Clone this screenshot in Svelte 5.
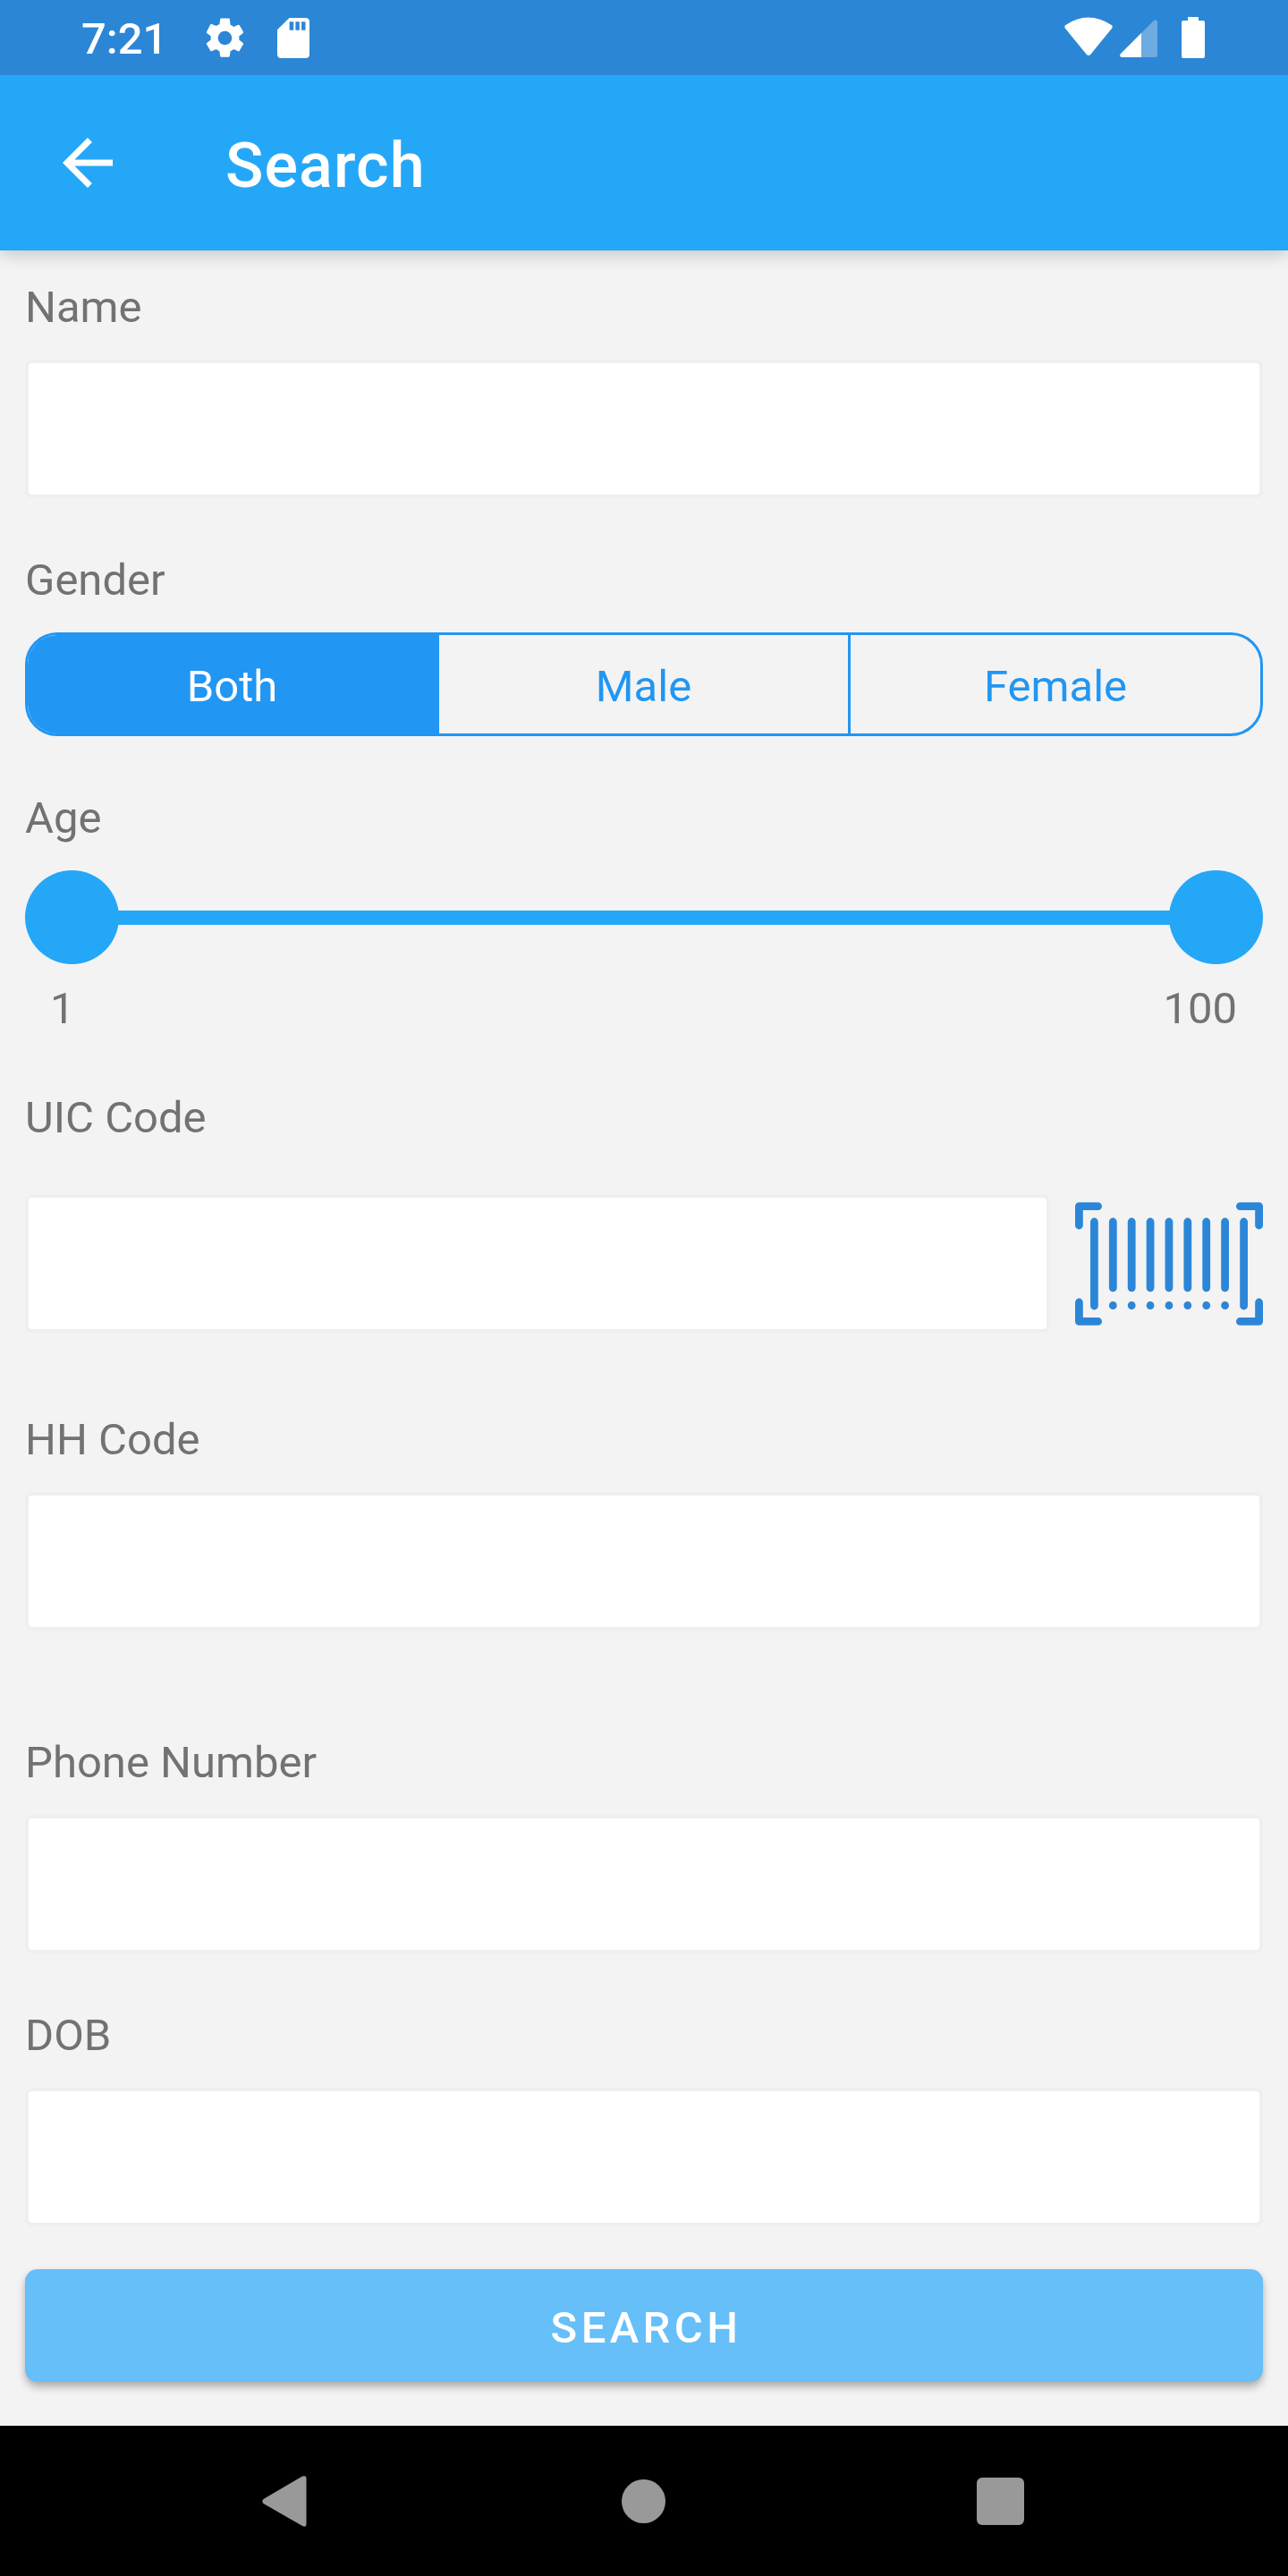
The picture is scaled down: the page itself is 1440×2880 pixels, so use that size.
<script>
  let gender = $state('Both');
  const genders = ['Both', 'Male', 'Female'];
  const shortBars = Array.from({ length: 7 }, (_, i) => 42.3 + i * 20.88);
</script>

<div class="screen">
  <div class="status">
    <span class="time">7:21</span>
    <svg class="gear" viewBox="0 0 24 24" fill="#fff"><path d="M19.14 12.94c.04-.3.06-.61.06-.94 0-.32-.02-.64-.07-.94l2.03-1.58c.18-.14.23-.41.12-.61l-1.92-3.32c-.12-.22-.37-.29-.59-.22l-2.39.96c-.5-.38-1.03-.7-1.62-.94L14.4 2.41c-.04-.24-.24-.41-.48-.41h-3.84c-.24 0-.43.17-.47.41l-.36 2.54c-.59.24-1.13.57-1.62.94l-2.39-.96c-.22-.08-.47 0-.59.22L2.74 8.87c-.12.21-.08.47.12.61l2.03 1.58c-.05.3-.09.63-.09.94s.02.64.07.94l-2.03 1.58c-.18.14-.23.41-.12.61l1.92 3.32c.12.22.37.29.59.22l2.39-.96c.5.38 1.03.7 1.62.94l.36 2.54c.05.24.24.41.48.41h3.84c.24 0 .44-.17.47-.41l.36-2.54c.59-.24 1.13-.56 1.62-.94l2.39.96c.22.08.47 0 .59-.22l1.92-3.32c.12-.22.07-.47-.12-.61l-2.01-1.58zM12 15.5c-1.93 0-3.5-1.57-3.5-3.5s1.57-3.5 3.5-3.5 3.5 1.57 3.5 3.5-1.57 3.5-3.5 3.5z" /></svg>
    <svg class="card" viewBox="0 0 36 45"><path fill="#fff" fill-rule="evenodd" d="M13.5 0H31.5Q36 0 36 4.5V40.5Q36 45 31.5 45H4.5Q0 45 0 40.5V13.3ZM13.6 4.3V13.7H18.2V4.3ZM20.4 4.3V13.7H24.8V4.3ZM27.1 4.3V13.7H31.5V4.3Z" /></svg>
    <span class="spacer"></span>
    <svg class="wifi" viewBox="0 0 54 44"><path fill="#fff" d="M1 9.2Q26.5-8 53 9.2Q54.4 10.6 53.2 12.4L29.2 42Q27 44 24.8 42L.8 12.4Q-.4 10.6 1 9.2Z" /></svg>
    <svg class="signal" viewBox="0 0 42 42"><path fill="#6dabe2" d="M1 38 38 1Q42-1 42 3V40Q42 42 40 42H2Q-1 41 1 38Z" /><path fill="#fff" d="M24 15V42H2Q-1 41 1 38Z" /></svg>
    <svg class="battery" viewBox="0 0 26 46" fill="#fff"><path d="M7 0H19V4H24Q26 4 26 6V44Q26 46 24 46H2Q0 46 0 44V6Q0 4 2 4H7Z" /></svg>
  </div>

  <header class="appbar">
    <svg class="back" viewBox="0 0 24 24" fill="#fff"><path d="M20 11H7.83l5.59-5.59L12 4l-8 8 8 8 1.41-1.41L7.83 13H20v-2z" /></svg>
    <h1>Search</h1>
  </header>

  <main>
    <label for="name">Name</label>
    <input id="name" />

    <span class="label next">Gender</span>
    <div class="segments">
      {#each genders as g}
        <button class:active={gender === g} onclick={() => (gender = g)}>{g}</button>
      {/each}
    </div>

    <span class="label next">Age</span>
    <div class="slider">
      <span class="thumb"></span>
      <span class="track"></span>
      <span class="thumb"></span>
    </div>
    <div class="range"><span>1</span><span>100</span></div>

    <label class="uic" for="uic">UIC Code</label>
    <div class="scan">
      <input id="uic" />
      <svg class="barcode" viewBox="0 0 210 138" fill="none" stroke="#2c86d7" stroke-width="8.8" stroke-linecap="round" stroke-linejoin="round">
        <path d="M4.4 26V4.6H25.6M184.4 4.6H205.6V26M4.4 112V133.4H25.6M184.4 133.4H205.6V112" />
        <path d="M21.4 22V116M188.6 22V116" />
        {#each shortBars as x}
          <path d="M{x} 22V95.8M{x} 115.4V115.6" />
        {/each}
      </svg>
    </div>

    <label class="hh" for="hh">HH Code</label>
    <input id="hh" />

    <label class="phone" for="phone">Phone Number</label>
    <input id="phone" />

    <label class="next" for="dob">DOB</label>
    <input id="dob" />

    <button class="submit">SEARCH</button>
  </main>

  <nav>
    <svg class="nav-back" viewBox="0 0 50 57"><path fill="#999" d="M45 .6Q49.5-1 49.5 3V54Q49.5 58 45 56L1.5 31Q-.8 28.5 1.5 26Z" /></svg>
    <span class="nav-home"></span>
    <span class="nav-recent"></span>
  </nav>
</div>

<style>
  :global(body) { margin: 0; }
  .screen {
    width: 1440px;
    height: 2880px;
    display: flex;
    flex-direction: column;
    background: #f3f3f3;
    font-family: Roboto, sans-serif;
    font-size: 49px;
    line-height: 58px;
    color: #727272;
    overflow: hidden;
  }
  svg { display: block; flex: none; }

  .status {
    height: 84px;
    flex: none;
    display: flex;
    align-items: center;
    box-sizing: border-box;
    padding: 0 93px 0 91px;
    background: #2c86d6;
    color: #fff;
    font-weight: 500;
  }
  .time { width: 134px; padding-top: 4px; }
  .gear { width: 53px; height: 53px; }
  .card { width: 36px; height: 45px; margin-left: 32px; }
  .spacer { flex: 1; }
  .wifi { width: 54px; height: 44px; margin: 0 8px 3px 0; }
  .signal { width: 42px; height: 42px; margin: 2px 27px 0 0; }
  .battery { width: 26px; height: 46px; }

  .appbar {
    height: 196px;
    flex: none;
    display: flex;
    align-items: center;
    box-sizing: border-box;
    padding-left: 56px;
    background: #25a7f7;
    box-shadow: 0 4px 18px rgba(0, 0, 0, 0.2);
    clip-path: inset(0 0 -40px 0);
    color: #fff;
  }
  .back { width: 84px; height: 84px; }
  h1 {
    margin: 6px 0 0 112px;
    font-size: 70px;
    line-height: 82px;
    font-weight: 500;
    letter-spacing: 1.1px;
  }

  main {
    flex: 1;
    display: flex;
    flex-direction: column;
    padding: 35px 28px 0;
  }
  label, .label { margin-bottom: 29px; }
  .next { margin-top: 63px; }
  input {
    width: 100%;
    height: 155px;
    flex: none;
    box-sizing: border-box;
    padding: 0 28px;
    border: 4px solid #efefef;
    border-radius: 8px;
    background: #fff;
    outline: none;
    font: inherit;
  }

  .segments {
    height: 116px;
    flex: none;
    display: grid;
    grid-template-columns: 460fr 457fr 461fr;
    box-sizing: border-box;
    border: 3px solid #2196f3;
    border-radius: 36px;
    overflow: hidden;
  }
  .segments button {
    padding: 6px 0 0;
    border: 0;
    background: none;
    color: #2196f3;
    font: inherit;
  }
  .segments button + button + button { border-left: 3px solid #2196f3; }
  .segments button.active { padding-right: 3px; background: #2196f3; color: #fff; }

  .slider { display: flex; align-items: center; height: 105px; flex: none; }
  .thumb { width: 105px; height: 105px; border-radius: 50%; background: #25a7f7; }
  .track { flex: 1; height: 16px; margin: 0 -2px; background: #25a7f7; }
  .range {
    display: flex;
    justify-content: space-between;
    margin-top: 21px;
    padding: 0 29px 0 28px;
  }

  .uic { margin: 64px 0 56px; }
  .scan { display: flex; align-items: center; gap: 28px; }
  .scan input { width: auto; flex: 1; }
  .barcode { width: 210px; height: 138px; }
  .hh { margin-top: 91px; }
  .phone { margin-top: 119px; }

  .submit {
    height: 126px;
    flex: none;
    margin-top: 48px;
    padding: 6px 0 0 5px;
    border: 0;
    border-radius: 14px;
    background: #66bff8;
    box-shadow: 0 6px 10px rgba(0, 0, 0, 0.25), 0 2px 6px rgba(0, 0, 0, 0.06);
    color: #fff;
    font: inherit;
    font-weight: 500;
    letter-spacing: 4.4px;
  }

  nav {
    height: 168px;
    flex: none;
    display: flex;
    align-items: center;
    justify-content: space-between;
    box-sizing: border-box;
    padding: 0 295.5px 0 293px;
    background: #000;
  }
  .nav-back { width: 50px; height: 57px; }
  .nav-home { width: 49px; height: 49px; margin-left: 5px; border-radius: 50%; background: #999; }
  .nav-recent { width: 53px; height: 53px; border-radius: 6px; background: #999; }
</style>
